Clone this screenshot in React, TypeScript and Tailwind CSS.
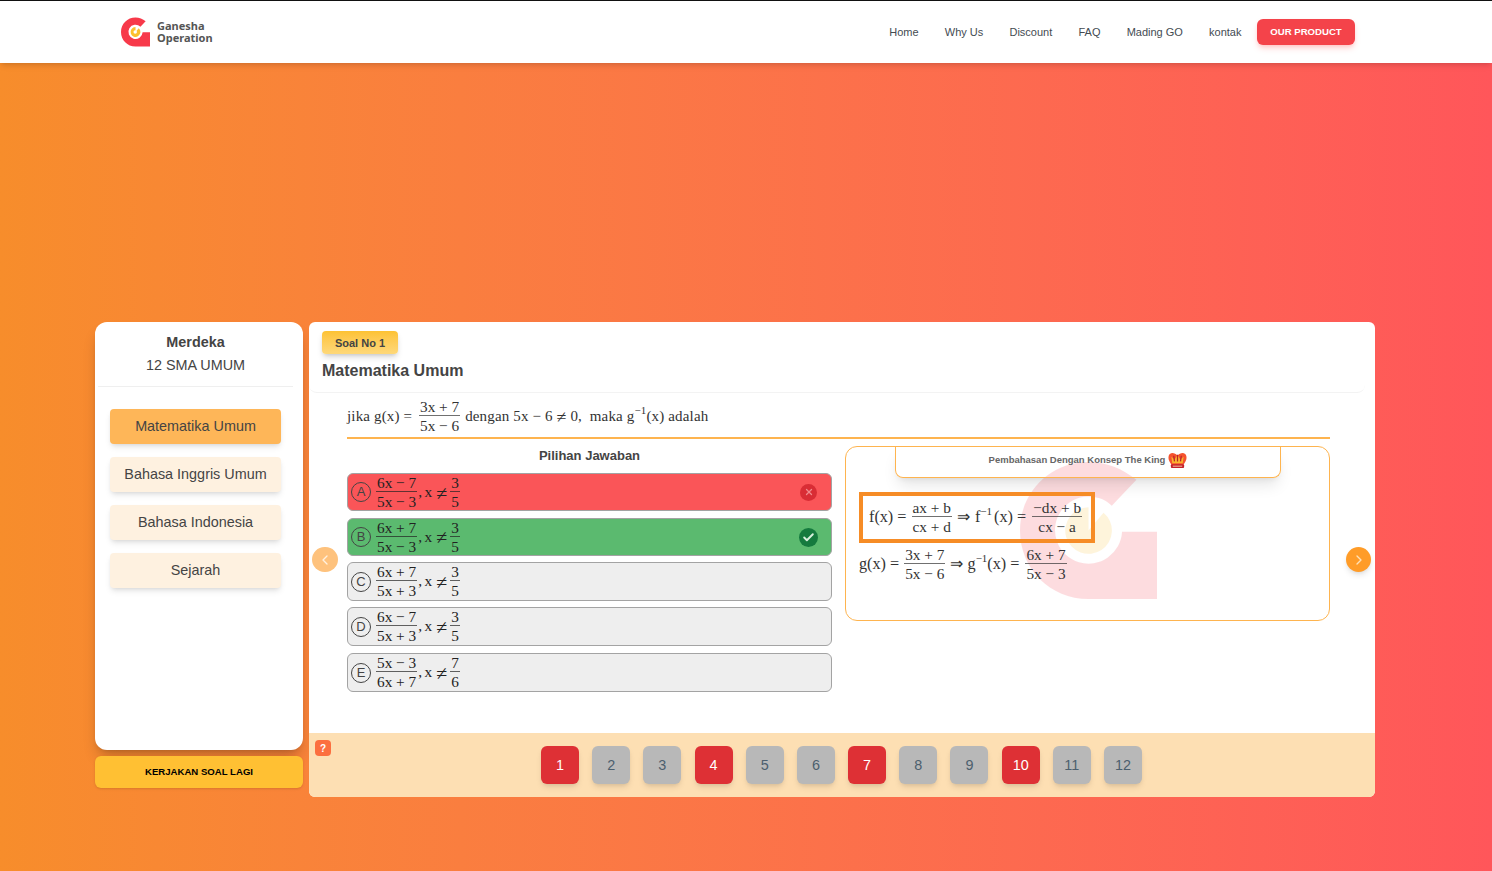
import React from "react";
import { ChevronLeft, ChevronRight, Check, X } from "lucide-react";

const Frac = ({ n, d, cls = "" }: { n: string; d: string; cls?: string }) => (
  <span className={`inline-flex flex-col items-center align-middle leading-none whitespace-nowrap text-[15.3px] tracking-normal ${cls}`}>
    <span className="px-px leading-[17px]">{n}</span>
    <span className="w-full h-px bg-current opacity-70" />
    <span className="px-px leading-[19px]">{d}</span>
  </span>
);

const GMark = ({ className, dot = false }: { className: string; dot?: boolean }) => (
  <svg viewBox="0 0 100 100" className={className}>
    <path
      fill="#f7394a"
      d="M50 0 C63 0 75 5 85 13 L67 32 A24.5 24.5 0 1 0 74.5 51 L100 51 L100 100 L50 100 C22 100 0 78 0 50 C0 22 22 0 50 0 Z"
    />
    <path fill="#fcc02e" d="M61 37 A17 17 0 1 1 50 33 L50 50 Z" />
    {dot && <circle cx="49" cy="50" r="6" fill="#fff" />}
  </svg>
);

const Crown = () => (
  <svg viewBox="0 0 20 18" className="w-[19px] h-[17px] ml-[3px]">
    <path d="M10 4 C7 0 1 0 0.5 5 C0 9 3 12 4 14 L16 14 C17 12 20 9 19.5 5 C19 0 13 0 10 4 Z" fill="#f5532f" />
    <path d="M4.5 12 L3.5 5 L7 8 L10 3 L13 8 L16.5 5 L15.5 12 Z" fill="#f9b42e" />
    <path d="M6 4 L6.8 10 M10 3 L10 10 M14 4 L13.2 10" stroke="#b9232b" strokeWidth="1.3" fill="none" />
    <rect x="3" y="13" width="14" height="4" rx="1" fill="#c4212c" />
    <rect x="5" y="14.5" width="10" height="1" fill="#f6c9a0" />
  </svg>
);

const nav = ["Home", "Why Us", "Discount", "FAQ", "Mading GO", "kontak"];
const subjects = ["Matematika Umum", "Bahasa Inggris Umum", "Bahasa Indonesia", "Sejarah"];

const options = [
  { l: "A", n: "6x − 7", d: "5x − 3", a: "3", b: "5", bg: "bg-[#fa5558]", h: "h-[38px]", mt: "mt-0", pt: "pt-px" },
  { l: "B", n: "6x + 7", d: "5x − 3", a: "3", b: "5", bg: "bg-[#5bba6f]", h: "h-[38px]", mt: "mt-[7px]", pt: "pt-0" },
  { l: "C", n: "6x + 7", d: "5x + 3", a: "3", b: "5", bg: "bg-[#eeeeee]", h: "h-[39px]", mt: "mt-[6px]", pt: "pt-0" },
  { l: "D", n: "6x − 7", d: "5x + 3", a: "3", b: "5", bg: "bg-[#eeeeee]", h: "h-[39px]", mt: "mt-[6px]", pt: "pt-0" },
  { l: "E", n: "5x − 3", d: "6x + 7", a: "7", b: "6", bg: "bg-[#eeeeee]", h: "h-[39px]", mt: "mt-[7px]", pt: "pt-0" },
];

const numbers = [1, 2, 3, 4, 5, 6, 7, 8, 9, 10, 11, 12];
const reds = [1, 4, 7, 10];

export default function App() {
  return (
    <div className="min-h-screen flex flex-col bg-gradient-to-r from-[#f78d2b] to-[#ff565a] font-['Liberation_Sans',sans-serif] text-[#444444]">
      <header className="h-[63px] bg-white border-t border-[#111111] shadow-md flex items-center justify-between pl-[121px] pr-[137px]">
        <div className="flex items-center gap-[7px]">
          <GMark dot className="w-[29px] h-[30px]" />
          <div className="font-['Noto_Sans',sans-serif] font-bold text-[11px] leading-[12px] text-[#555555]">
            <div>Ganesha</div>
            <div>Operation</div>
          </div>
        </div>
        <nav className="flex items-center gap-[15.5px]">
          <div className="flex items-center gap-[26.2px]">
            {nav.map((t) => (
              <a key={t} className="text-[11px] text-[#444b52]">
                {t}
              </a>
            ))}
          </div>
          <button className="w-[98px] h-[26px] rounded-md bg-[#f4434a] text-white text-[9.6px] font-bold shadow-md shadow-red-300/50">
            OUR PRODUCT
          </button>
        </nav>
      </header>

      <main className="flex gap-[6px] pl-[95px] pr-[117px] pt-[259px]">
        <aside className="w-[208px] flex flex-col">
          <div className="h-[428px] bg-white rounded-xl shadow-lg shadow-black/20 pt-[10px]">
            <div className="pr-[7px] text-center text-[14.4px]">
              <div className="font-bold leading-5">Merdeka</div>
              <div className="mt-[3px] leading-5">12 SMA UMUM</div>
            </div>
            <div className="ml-[3px] mr-[10px] mt-[11px] h-px bg-[#efefef]" />
            <div className="mt-[22px] ml-[15px] w-[171px] flex flex-col gap-[13px]">
              {subjects.map((s, i) => (
                <button
                  key={s}
                  className={`h-[35px] pt-px rounded text-[14.4px] shadow-md shadow-black/10 ${i === 0 ? "bg-[#feb658]" : "bg-[#fef1e0]"}`}
                >
                  {s}
                </button>
              ))}
            </div>
          </div>
          <button className="mt-[6px] h-[32px] rounded-md bg-[#ffc033] text-black text-[9.6px] font-bold shadow-sm">
            KERJAKAN SOAL LAGI
          </button>
        </aside>

        <section className="relative w-[1066px] h-[475px] bg-white rounded-md flex flex-col">
          <div className="h-[71px] mr-[10px] pl-[13px] pt-[9px] border-b border-[#f3f3f3] rounded-b-lg">
            <div className="w-[76px] h-[23px] pt-px rounded bg-gradient-to-b from-[#fdc232] to-[#fed878] shadow-md shadow-black/15 flex items-center justify-center text-[11px] font-bold">
              Soal No 1
            </div>
            <h2 className="mt-[7px] text-base font-bold leading-5">Matematika Umum</h2>
          </div>

          <div className="ml-[38px] mr-[45px] flex-1 font-['Liberation_Serif',serif]">
            <div className="h-[46px] border-b-2 border-[#feb44f] flex items-center text-[15px] tracking-[0.15px] text-[#333333] whitespace-pre pt-[3px]">
              jika g(x) = <Frac n="3x + 7" d="5x − 6" cls="ml-[3px] mr-[1px]" /> dengan 5x − 6 <span className="text-[18px] leading-none">≠</span> 0,  maka g
              <sup className="text-[11px] -top-[6px] leading-none">−1</sup>(x) adalah
            </div>

            <div className="flex gap-[13px] mt-[6px]">
              <div className="w-[485px]">
                <div className="h-[28px] pt-px text-center text-[13px] font-bold font-['Liberation_Sans',sans-serif] leading-5">
                  Pilihan Jawaban
                </div>
                {options.map((o) => (
                  <div
                    key={o.l}
                    className={`${o.h} ${o.mt} ${o.bg} rounded-md border border-[#a3a3a3] flex items-center pl-[3px] pr-[13px] text-[15.3px] text-[#222222]`}
                  >
                    <span className="w-[20px] h-[20px] rounded-full border border-[#444444] flex items-center justify-center text-[13px] text-[#444444] font-['Liberation_Sans',sans-serif] shrink-0">
                      {o.l}
                    </span>
                    <span className={`ml-[5px] ${o.pt} flex items-center whitespace-pre`}>
                      <Frac n={o.n} d={o.d} />
                      <span className="ml-[1px]">,</span>
                      <span className="ml-[2.5px]">x</span>
                      <span className="ml-[4px] text-[20px] leading-none">≠</span>
                      <Frac n={o.a} d={o.b} cls="ml-[3px]" />
                    </span>
                    {o.l === "A" && (
                      <span className="ml-auto mr-px w-[17px] h-[17px] rounded-full bg-[#d92d35] flex items-center justify-center">
                        <X size={10} strokeWidth={3} className="text-[#f08a8d]" />
                      </span>
                    )}
                    {o.l === "B" && (
                      <span className="ml-auto w-[19px] h-[19px] rounded-full bg-[#157a3e] flex items-center justify-center">
                        <Check size={13} strokeWidth={3.5} className="text-[#d9f0de]" />
                      </span>
                    )}
                  </div>
                ))}
              </div>

              <div className="relative w-[485px] h-[175px] mt-px rounded-xl border border-[#feb44f] text-[#333333] text-[16.2px] whitespace-pre">
                <GMark className="absolute left-[174px] top-[15px] w-[137px] h-[137px] opacity-[0.17]" />
                <div className="relative -top-px ml-[49px] mr-[48px] h-[32px] pb-[2px] bg-transparent border-x border-b border-[#feb44f] rounded-b-lg shadow-lg shadow-black/10 flex items-center justify-center font-['Liberation_Sans',sans-serif] text-[9.5px] font-bold text-[#666666]">
                  Pembahasan Dengan Konsep The King
                  <Crown />
                </div>
                <div className="relative ml-[13px] mt-[13px] w-[236px] h-[51px] border-[4px] border-[#f68c26] flex items-center pl-[6px]">
                  f(x) = <Frac n="ax + b" d="cx + d" cls="mx-[1px]" /> ⇒ <span className="ml-[1px]">f</span>
                  <sup className="text-[11px] -top-[6px] leading-none mr-[2px]">−1</sup>(x) = <Frac n="−dx + b" d="cx − a" cls="ml-[2px] tracking-[0.3px]" />
                </div>
                <div className="relative ml-[13px] mt-[3px] flex items-center">
                  g(x) = <Frac n="3x + 7" d="5x − 6" cls="mx-[1px]" /> ⇒ g
                  <sup className="text-[11px] -top-[6px] leading-none">−1</sup>(x) = <Frac n="6x + 7" d="5x − 3" cls="ml-[2px]" />
                </div>
              </div>
            </div>
          </div>

          <button className="absolute left-[3px] top-[225px] w-[26px] h-[25px] rounded-full bg-[#fec27d] flex items-center justify-center text-[#fff1df]">
            <ChevronLeft size={16} />
          </button>
          <button className="absolute right-[4px] top-[225px] w-[25px] h-[25px] rounded-full bg-[#ff9c28] shadow-md shadow-black/10 flex items-center justify-center text-[#ffe2b8]">
            <ChevronRight size={16} />
          </button>

          <div className="relative h-[64px] bg-[#fddfb3] rounded-b-md flex items-center justify-center gap-[13.2px] pr-[1px]">
            <span className="absolute left-[6px] top-[7px] w-[16px] h-[16px] rounded-sm bg-[#fc6f3f] text-white text-[10px] font-bold flex items-center justify-center">
              ?
            </span>
            {numbers.map((n) => (
              <button
                key={n}
                className={`w-[38px] h-[38px] pt-px rounded-md text-[14.4px] shadow-md shadow-black/10 ${
                  reds.includes(n) ? "bg-[#de3035] text-white" : "bg-[#b8b8b8] text-[#4c5f6e]"
                }`}
              >
                {n}
              </button>
            ))}
          </div>
        </section>
      </main>
    </div>
  );
}
